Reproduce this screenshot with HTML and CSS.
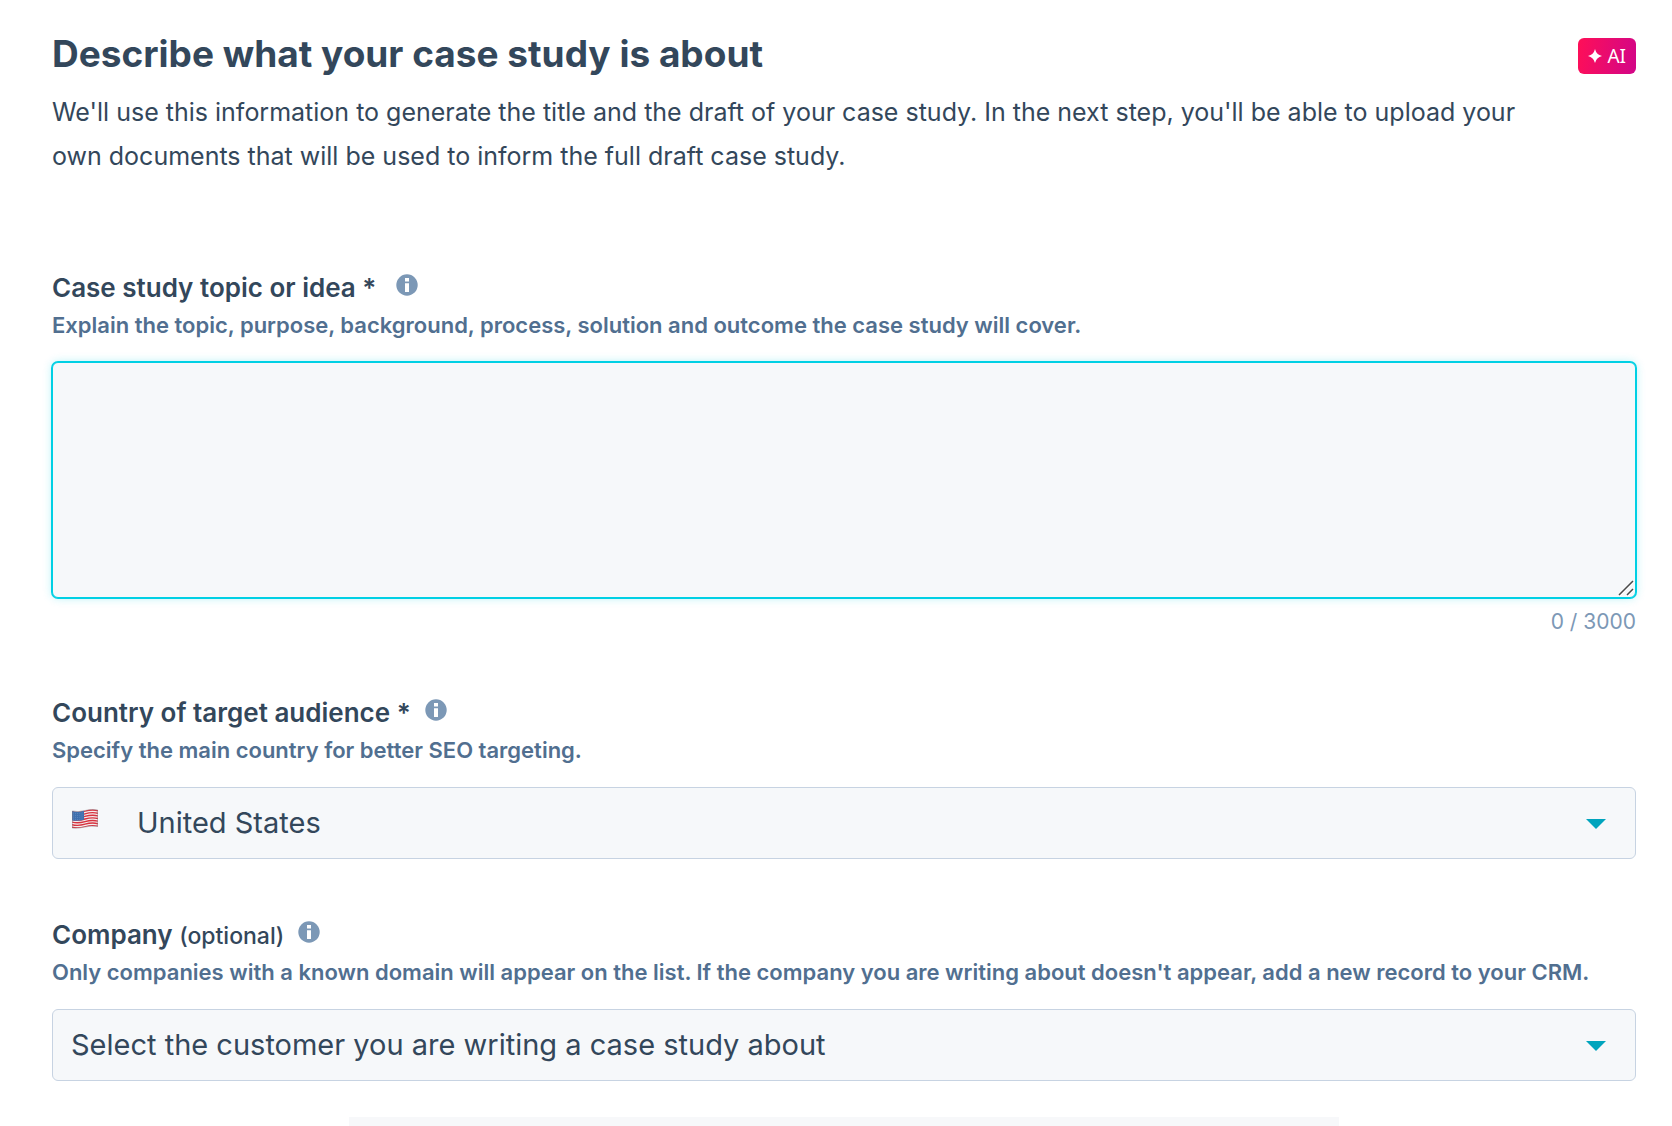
FILE: index.html
```html
<!DOCTYPE html>
<html lang="en">
<head>
    <meta charset="UTF-8">
    <meta name="viewport" content="width=device-width, initial-scale=1.0">
    <title>Describe what your case study is about</title>
    <link rel="stylesheet" href="styles.css">
</head>
<body>
    <!-- Shared icons -->
    <svg class="sprite" aria-hidden="true">
        <symbol id="icon-info" viewBox="0 0 22 22">
            <circle cx="11" cy="11" r="10.7" fill="#7c98b6"/>
            <path fill="#fff" d="M9 4h4v3.600h-4zM9 9.300h4v8.700h-4z"/>
        </symbol>
        <symbol id="icon-caret" viewBox="0 0 20 10">
            <path fill="#00a4bd" d="M0 0h20L10 10z"/>
        </symbol>
    </svg>

    <main class="page">
        <header class="page-header">
            <div class="intro">
                <h1>Describe what your case study is about</h1>
                <p>We'll use this information to generate the title and the draft of your case study. In the next step, you'll be able to upload your own documents that will be used to inform the full draft case study.</p>
            </div>
            <span class="ai-badge">
                <svg width="14" height="14" viewBox="0 0 14 14" aria-hidden="true">
                    <path fill="#fff" d="M7 0Q8.300 5.700 14 7Q8.300 8.300 7 14Q5.700 8.300 0 7Q5.700 5.700 7 0z"/>
                </svg>
                AI
            </span>
        </header>

        <form>
            <!-- Topic -->
            <div class="field field-topic">
                <div class="label-row label-row-wide">
                    <label for="topic">Case study topic or idea *</label>
                    <svg class="info"><use href="#icon-info"/></svg>
                </div>
                <p class="help" id="topic-help">Explain the topic, purpose, background, process, solution and outcome the case study will cover.</p>
                <div class="control">
                    <textarea id="topic" aria-describedby="topic-help" maxlength="3000"></textarea>
                    <svg class="grip" viewBox="0 0 16 16" aria-hidden="true">
                        <path fill="none" stroke="#fff" stroke-width="1" d="M2 16L16 2M10 16L16 10"/>
                        <path fill="none" stroke="#4a4a4a" stroke-width="1.500" d="M1 15L15 1M9 15L15 9"/>
                    </svg>
                </div>
                <div class="counter">0 / 3000</div>
            </div>

            <!-- Country -->
            <div class="field field-country">
                <div class="label-row">
                    <label for="country">Country of target audience *</label>
                    <svg class="info"><use href="#icon-info"/></svg>
                </div>
                <p class="help" id="country-help">Specify the main country for better SEO targeting.</p>
                <div class="control">
                    <select id="country" class="with-flag" aria-describedby="country-help">
                        <option>United States</option>
                    </select>
                    <svg class="flag" viewBox="0 0 26 20" aria-hidden="true">
                        <defs>
                            <clipPath id="flag-shape">
                                <path d="M0 2Q6 3.500 13 1.500T26 1V17.500Q19 16.500 13 18T0 19z"/>
                            </clipPath>
                        </defs>
                        <g clip-path="url(#flag-shape)">
                            <path fill="#f3eeee" d="M0 0h26v20H0z"/>
                            <path fill="none" stroke="#d8323f" stroke-width="1.400" d="M0 2.700Q6 4.200 13 2.200T26 1.700M0 5.300Q6 6.800 13 4.800T26 4.300M0 7.900Q6 9.400 13 7.400T26 6.900M0 10.500Q6 12 13 10T26 9.500M0 13.100Q6 14.600 13 12.600T26 12.100M0 15.700Q6 17.200 13 15.200T26 14.700M0 18.300Q6 19.800 13 17.800T26 17.300"/>
                            <path fill="#3e6fae" d="M0 1.500Q6 3.500 12 1.500V10.800Q6 12.500 0 11.500z"/>
                            <path fill="none" stroke="#86a6d0" stroke-width="0.700" stroke-dasharray="0.700 1.500" d="M1 4Q6 5 12 3.500M1 6Q6 7 12 5.500M1 8Q6 9 12 7.500M1 10Q6 11 12 9.500"/>
                        </g>
                        <path fill="none" stroke="#8b7d84" stroke-width="0.500" d="M0.300 2Q6 3.500 13 1.500T25.700 1V17.500Q19 16.500 13 18T0.300 19z"/>
                    </svg>
                    <svg class="caret"><use href="#icon-caret"/></svg>
                </div>
            </div>

            <!-- Company -->
            <div class="field">
                <div class="label-row">
                    <label for="company">Company <small>(optional)</small></label>
                    <svg class="info"><use href="#icon-info"/></svg>
                </div>
                <p class="help" id="company-help">Only companies with a known domain will appear on the list. If the company you are writing about doesn't appear, add a new record to your CRM.</p>
                <div class="control">
                    <select id="company" aria-describedby="company-help">
                        <option>Select the customer you are writing a case study about</option>
                    </select>
                    <svg class="caret"><use href="#icon-caret"/></svg>
                </div>
            </div>
        </form>

        <div class="next-panel"></div>
    </main>
</body>
</html>
```

FILE: styles.css
```css
* {
    box-sizing: border-box;
}
body {
    margin: 0;
    background: #fff;
    color: #33475b;
    font-family: Inter, "Open Sans", sans-serif;
}
.sprite {
    position: absolute;
    width: 0;
    height: 0;
}
.page {
    padding: 32px 36px 0 52px;
}
.page-header {
    display: flex;
    justify-content: space-between;
    align-items: flex-start;
    margin-bottom: 91px;
}
.intro {
    max-width: 1500px;
}
h1 {
    margin: 0 0 14px;
    font-size: 37px;
    line-height: 44px;
    font-weight: 700;
}
.intro p {
    margin: 0;
    font-size: 25px;
    line-height: 44px;
}
.ai-badge {
    display: flex;
    align-items: center;
    gap: 5px;
    flex: none;
    height: 36px;
    margin-top: 6px;
    padding: 0 10px;
    border-radius: 6px;
    background: linear-gradient(100deg, #ff0f57, #d20688);
    color: #fff;
    font-family: "Noto Sans", sans-serif;
    font-size: 19px;
    font-weight: 400;
}

/* Fields */
.field {
    margin-bottom: 36px;
}
.field-topic {
    margin-bottom: 54px;
}
.field-country {
    margin-bottom: 57px;
}
.label-row {
    display: flex;
    align-items: center;
    gap: 14px;
    height: 38px;
}
.label-row-wide {
    gap: 20px;
}
label {
    font-size: 26px;
    line-height: 36px;
    font-weight: 600;
}
label small {
    font-size: 23px;
    font-weight: 500;
}
.info {
    width: 22px;
    height: 22px;
    margin-bottom: 6px;
}
.help {
    margin: 0 0 19px;
    color: #516f90;
    font-size: 22px;
    line-height: 36px;
    font-weight: 600;
}
.control {
    position: relative;
}
textarea,
select {
    display: block;
    width: 100%;
    background: #f6f8fa;
    color: #33475b;
    font-family: inherit;
    font-size: 29px;
    border: 1px solid #c7d3e2;
    border-radius: 6px;
}
textarea {
    height: 236px;
    padding: 16px 20px;
    border-color: #00d0e4;
    outline: none;
    box-shadow: 0 0 0 1px #00d0e4, 0 0 10px rgba(0, 208, 228, 0.3);
    resize: none;
}
.grip {
    position: absolute;
    right: 2px;
    bottom: 2px;
    width: 16px;
    height: 16px;
}
.counter {
    margin-top: 6px;
    color: #7c98b6;
    font-size: 21px;
    line-height: 36px;
    text-align: right;
}
select {
    height: 72px;
    padding: 0 60px 2px 18px;
    appearance: none;
}
.with-flag {
    padding-left: 84px;
}
.flag {
    position: absolute;
    left: 20px;
    top: 22px;
    width: 26px;
    height: 20px;
}
.caret {
    position: absolute;
    right: 30px;
    top: 32px;
    width: 20px;
    height: 10px;
}
.next-panel {
    width: 62.5%;
    height: 9px;
    margin: 0 auto;
    background: #f7f8fa;
}
```
